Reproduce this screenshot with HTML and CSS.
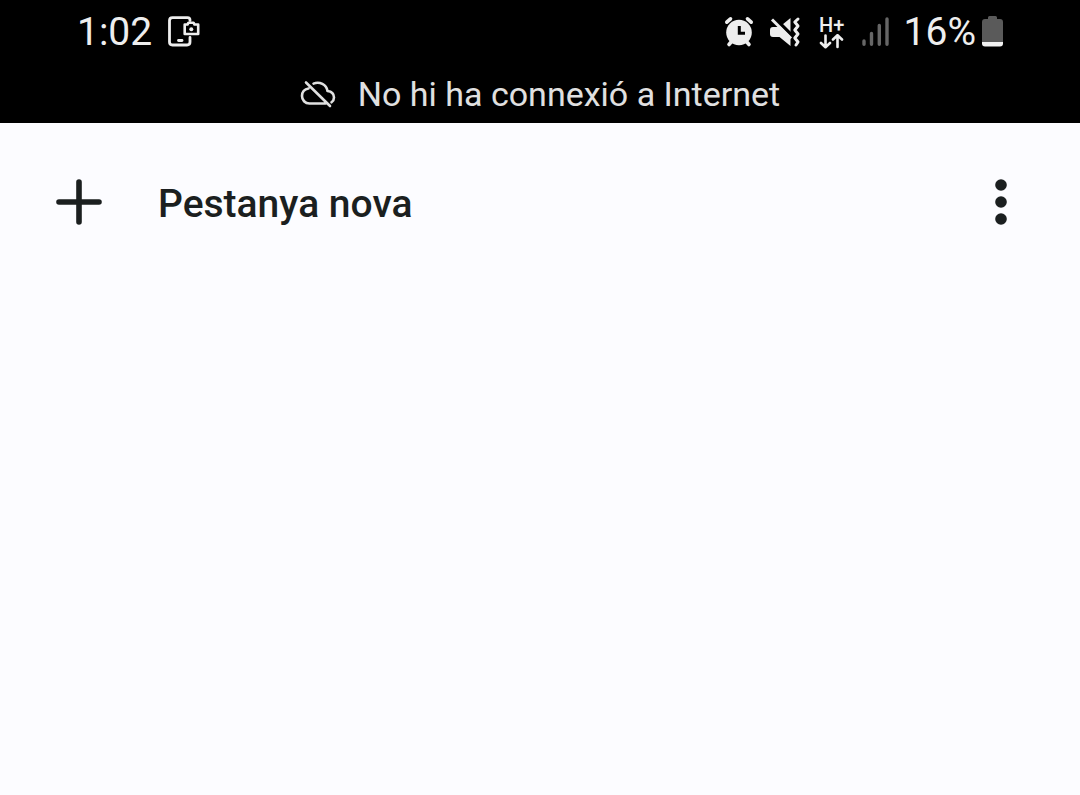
FILE: index.html
```html
<!DOCTYPE html>
<html lang="ca">
<head>
<meta charset="utf-8">
<meta name="viewport" content="width=device-width, initial-scale=1">
<title>Pestanya nova</title>
<link rel="stylesheet" href="styles.css">
</head>
<body>
<div class="system">
  <div class="status">
    <div class="status-start">
      <time class="clock">1:02</time>
      <svg class="icon-capture" viewBox="168 16 32 32" fill="none" stroke="#eee" stroke-width="2.800" stroke-linejoin="round" stroke-linecap="round" aria-hidden="true">
        <path d="M190 20.500V20Q190 17.600 187.500 17.600H172.500Q169.500 17.600 169.500 20.600V42Q169.500 45 172.500 45H187Q190 45 190 42V37.500"/>
        <path d="M178.500 40.500H182"/>
        <path d="M184.700 24.500H187.500L188.500 22.700H193.500L194.500 24.500H198.200V34H184.700Z" stroke-width="2.600"/>
        <circle cx="191.300" cy="29.200" r="2" fill="#eee" stroke="none"/>
      </svg>
    </div>
    <div class="status-end">
      <svg class="icon-alarm" viewBox="724 16 30 32" aria-hidden="true">
        <g stroke="#eee" stroke-width="3.600" stroke-linecap="round">
          <path d="M726.800 22.200L730.500 18.800M751.200 22.200L747.500 18.800M729 44.500L732 41M749 44.500L746 41"/>
        </g>
        <circle cx="739" cy="32.500" r="12.800" fill="#eee"/>
        <path d="M739.300 26V33.200H745" fill="none" stroke="#000" stroke-width="3"/>
      </svg>
      <svg class="icon-mute" viewBox="769 16 32 32" aria-hidden="true">
        <path d="M790.500 18V46L779.500 37H773Q770 37 770 34V30Q770 27 773 27H779.500Z" fill="#eee"/>
        <path d="M773.500 17L792 35.500" stroke="#000" stroke-width="3.600"/>
        <path d="M772 19.500L791 38.500" stroke="#eee" stroke-width="3"/>
        <path d="M798 19L794.800 22L798 26L794.800 30L798 34L794.800 38L798 42L796 45" fill="none" stroke="#eee" stroke-width="3" stroke-linejoin="round" stroke-linecap="round"/>
      </svg>
      <div class="network">
        <span class="network-type">H+</span>
        <svg class="icon-transfer" viewBox="820 34 25 15" fill="none" stroke="#eee" stroke-width="2.600" stroke-linecap="round" stroke-linejoin="round" aria-hidden="true">
          <path d="M826.500 35.500V47M822 43L826.500 47.200L831 43M838.500 47V35.500M834 39.500L838.500 35.200L843 39.500"/>
        </svg>
      </div>
      <svg class="icon-signal" viewBox="861 16 30 32" stroke="#666" stroke-width="3.400" stroke-linecap="round" aria-hidden="true">
        <path d="M864 41V44.200M871.500 33.500V44.200M879.300 25.500V44.200M887 19V44.200"/>
      </svg>
      <span class="level">16%</span>
      <svg class="icon-battery" viewBox="982 16 22 32" aria-hidden="true">
        <path d="M988 19V17.500Q988 16 989.500 16H995.500Q997 16 997 17.500V19H1000Q1003 19 1003 22V42H982V22Q982 19 985 19Z" fill="#5a5a5a"/>
        <path d="M982 42H1003V43.500Q1003 46.500 1000 46.500H985Q982 46.500 982 43.500Z" fill="#f2f2f2"/>
      </svg>
    </div>
  </div>
  <div class="offline" role="status">
    <svg class="icon-cloud" viewBox="300 80 36 28" fill="none" stroke="#e0e0e0" stroke-width="2.600" stroke-linecap="round" stroke-linejoin="round" aria-hidden="true">
      <path d="M306 82.500L330 106M308.500 88.500C304.500 89 302 92 302 96C302 100 305 103.500 309.500 103.500H325.500M313.500 83.600C319.500 81 326.500 84.500 327.500 91C331.500 91.500 334 94 334 97.500C334 99.500 333 101.200 331.500 102.300"/>
    </svg>
    <span>No hi ha connexió a Internet</span>
  </div>
</div>
<main class="toolbar">
  <button class="new-tab" type="button">
    <svg class="icon-plus" viewBox="0 0 46 46" stroke="#1b1f1f" stroke-width="5.600" stroke-linecap="round" aria-hidden="true"><path d="M23 3V43M3 23H43"/></svg>
    <span class="new-tab-label">Pestanya nova</span>
  </button>
  <button class="more" type="button" aria-label="Més opcions">
    <svg class="icon-more" viewBox="0 0 12 46" fill="#1b1f20" aria-hidden="true"><circle cx="6" cy="6" r="5.800"/><circle cx="6" cy="23" r="5.800"/><circle cx="6" cy="40" r="5.800"/></svg>
  </button>
</main>
</body>
</html>
```
FILE: styles.css
```css
* {
  box-sizing: border-box;
}

body {
  margin: 0;
  min-height: 100vh;
  background: #fcfcff;
  color: #1b1f20;
  font-family: Roboto, sans-serif;
}

svg {
  display: block;
  flex: none;
}

.system {
  background: #000;
  color: #eee;
}

.status {
  display: flex;
  justify-content: space-between;
  align-items: center;
  height: 64px;
  padding: 0 76px 0 77px;
}

.status-start,
.status-end {
  display: flex;
  align-items: center;
}

.status-start {
  gap: 16px;
}

.clock,
.level {
  font-size: 39px;
  line-height: 46px;
}

.icon-capture,
.icon-mute {
  width: 32px;
  height: 32px;
}

.icon-alarm,
.icon-signal {
  width: 30px;
  height: 32px;
}

.icon-mute {
  margin-left: 15px;
}

.network {
  display: flex;
  flex-direction: column;
  align-items: center;
  width: 26px;
  margin: 0 16px 0 18px;
}

.network-type {
  font-size: 20px;
  font-weight: 500;
  line-height: 18px;
}

.icon-transfer {
  width: 25px;
  height: 15px;
}

.level {
  margin: 0 6px 0 13px;
}

.icon-battery {
  width: 22px;
  height: 32px;
}

.offline {
  display: flex;
  justify-content: center;
  align-items: center;
  gap: 22px;
  height: 59px;
  color: #e0e0e0;
  font-size: 34px;
  line-height: 40px;
}

.icon-cloud {
  width: 36px;
  height: 28px;
}

.toolbar {
  display: flex;
  justify-content: space-between;
  align-items: center;
  padding: 48px 56px;
}

.new-tab,
.more {
  display: flex;
  align-items: center;
  margin: 0;
  border: 0;
  background: none;
  color: inherit;
  font: inherit;
}

.new-tab {
  gap: 56px;
  height: 62px;
  padding: 0;
  font-size: 39px;
  font-weight: 500;
  line-height: 46px;
}

.new-tab-label {
  padding-top: 4px;
}

.more {
  height: 62px;
  padding: 0 17px;
}

.icon-plus {
  width: 46px;
  height: 46px;
}

.icon-more {
  width: 12px;
  height: 46px;
}
```
